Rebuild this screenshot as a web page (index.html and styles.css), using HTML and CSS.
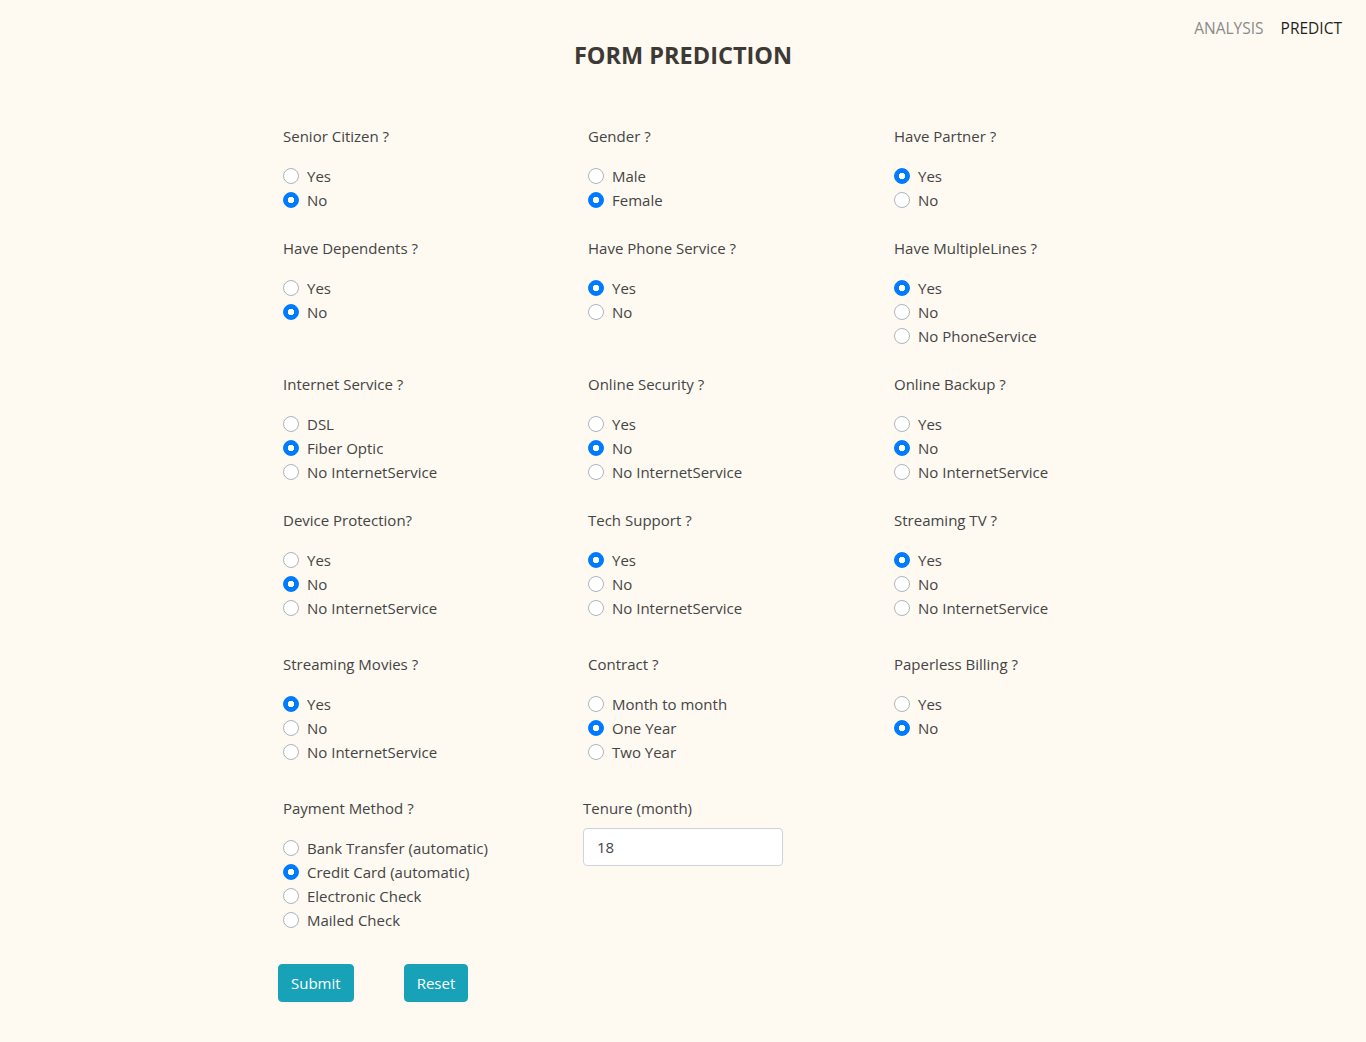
FILE: index.html
```html
<!DOCTYPE html>
<html>
<head>
<meta charset="utf-8">
<link rel="stylesheet" href="styles.css">
</head>
<body>
<nav class="nav">
  <a class="nav-link muted">ANALYSIS</a>
  <a class="nav-link active">PREDICT</a>
</nav>
<h1 class="title">FORM PREDICTION</h1>
<form class="form">
  <div class="grid">
    <div class="group"><div class="q">Senior Citizen ?</div>
      <label class="opt"><input type="radio" name="sc">Yes</label>
      <label class="opt"><input type="radio" name="sc" checked>No</label></div>
    <div class="group"><div class="q">Gender ?</div>
      <label class="opt"><input type="radio" name="g">Male</label>
      <label class="opt"><input type="radio" name="g" checked>Female</label></div>
    <div class="group"><div class="q">Have Partner ?</div>
      <label class="opt"><input type="radio" name="p" checked>Yes</label>
      <label class="opt"><input type="radio" name="p">No</label></div>

    <div class="group"><div class="q">Have Dependents ?</div>
      <label class="opt"><input type="radio" name="d">Yes</label>
      <label class="opt"><input type="radio" name="d" checked>No</label></div>
    <div class="group"><div class="q">Have Phone Service ?</div>
      <label class="opt"><input type="radio" name="ps" checked>Yes</label>
      <label class="opt"><input type="radio" name="ps">No</label></div>
    <div class="group"><div class="q">Have MultipleLines ?</div>
      <label class="opt"><input type="radio" name="ml" checked>Yes</label>
      <label class="opt"><input type="radio" name="ml">No</label>
      <label class="opt"><input type="radio" name="ml">No PhoneService</label></div>

    <div class="group"><div class="q">Internet Service ?</div>
      <label class="opt"><input type="radio" name="is">DSL</label>
      <label class="opt"><input type="radio" name="is" checked>Fiber Optic</label>
      <label class="opt"><input type="radio" name="is">No InternetService</label></div>
    <div class="group"><div class="q">Online Security ?</div>
      <label class="opt"><input type="radio" name="os">Yes</label>
      <label class="opt"><input type="radio" name="os" checked>No</label>
      <label class="opt"><input type="radio" name="os">No InternetService</label></div>
    <div class="group"><div class="q">Online Backup ?</div>
      <label class="opt"><input type="radio" name="ob">Yes</label>
      <label class="opt"><input type="radio" name="ob" checked>No</label>
      <label class="opt"><input type="radio" name="ob">No InternetService</label></div>

    <div class="group wide"><div class="q">Device Protection?</div>
      <label class="opt"><input type="radio" name="dp">Yes</label>
      <label class="opt"><input type="radio" name="dp" checked>No</label>
      <label class="opt"><input type="radio" name="dp">No InternetService</label></div>
    <div class="group wide"><div class="q">Tech Support ?</div>
      <label class="opt"><input type="radio" name="ts" checked>Yes</label>
      <label class="opt"><input type="radio" name="ts">No</label>
      <label class="opt"><input type="radio" name="ts">No InternetService</label></div>
    <div class="group wide"><div class="q">Streaming TV ?</div>
      <label class="opt"><input type="radio" name="tv" checked>Yes</label>
      <label class="opt"><input type="radio" name="tv">No</label>
      <label class="opt"><input type="radio" name="tv">No InternetService</label></div>

    <div class="group wide"><div class="q">Streaming Movies ?</div>
      <label class="opt"><input type="radio" name="sm" checked>Yes</label>
      <label class="opt"><input type="radio" name="sm">No</label>
      <label class="opt"><input type="radio" name="sm">No InternetService</label></div>
    <div class="group wide"><div class="q">Contract ?</div>
      <label class="opt"><input type="radio" name="c">Month to month</label>
      <label class="opt"><input type="radio" name="c" checked>One Year</label>
      <label class="opt"><input type="radio" name="c">Two Year</label></div>
    <div class="group wide"><div class="q">Paperless Billing ?</div>
      <label class="opt"><input type="radio" name="pb">Yes</label>
      <label class="opt"><input type="radio" name="pb" checked>No</label></div>

    <div class="group wide"><div class="q">Payment Method ?</div>
      <label class="opt"><input type="radio" name="pm">Bank Transfer (automatic)</label>
      <label class="opt"><input type="radio" name="pm" checked>Credit Card (automatic)</label>
      <label class="opt"><input type="radio" name="pm">Electronic Check</label>
      <label class="opt"><input type="radio" name="pm">Mailed Check</label></div>
    <div class="field"><div class="q flat">Tenure (month)</div>
      <input class="text-input" type="text" value="18"></div>
    <div></div>
  </div>
  <div class="actions">
    <button type="button" class="btn">Submit</button>
    <button type="button" class="btn">Reset</button>
  </div>
</form>
</body>
</html>
```
FILE: styles.css
```css
html, body {
  margin: 0;
  padding: 0;
  background: #fefaf2;
}
body {
  font-family: "Open Sans", "Noto Sans", sans-serif;
  font-size: 15px;
  line-height: 24px;
  color: #444;
  height: 1042px;
}
.nav {
  display: flex;
  justify-content: flex-end;
  gap: 17px;
  padding: 16px 24px 0 0;
  height: 24px;
}
.nav-link {
  font-size: 15.5px;
  line-height: 24px;
}
.nav-link.muted { color: #8a8a8a; }
.nav-link.active { color: #1e1e1e; }
.title {
  margin: 0;
  margin-top: -1px;
  text-align: center;
  font-size: 23.5px;
  font-weight: 700;
  line-height: 32px;
  color: #3d3934;
}
.form {
  padding: 53px 0 0 278px;
}
.grid {
  display: grid;
  grid-template-columns: 305px 306px 305px;
}
.group {
  padding-left: 5px;
  padding-bottom: 24px;
}
.group.wide { padding-bottom: 32px; }
.q {
  height: 24px;
  margin-bottom: 16px;
}
.q.flat { margin-bottom: 8px; }
.opt {
  display: flex;
  align-items: center;
  height: 24px;
  gap: 8px;
}
.opt input {
  appearance: none;
  -webkit-appearance: none;
  margin: 0;
  width: 16px;
  height: 16px;
  border-radius: 50%;
  border: 1px solid #adb5bd;
  background: #fff;
  box-sizing: border-box;
  flex: none;
}
.opt input:checked {
  border-color: #007bff;
  background: radial-gradient(circle, #fff 0 3px, #007bff 3.5px);
}
.text-input {
  box-sizing: border-box;
  width: 200px;
  height: 38px;
  border: 1px solid #ced4da;
  border-radius: 4px;
  background: #fff;
  padding: 0 13px;
  font-family: inherit;
  font-size: 15px;
  color: #444;
  outline: none;
}
.actions {
  display: flex;
  gap: 50px;
}
.btn {
  height: 38px;
  padding: 0 12px;
  background: #17a2b8;
  border: 1px solid #17a2b8;
  border-radius: 4px;
  color: #fff;
  font-family: inherit;
  font-size: 15px;
}
```
